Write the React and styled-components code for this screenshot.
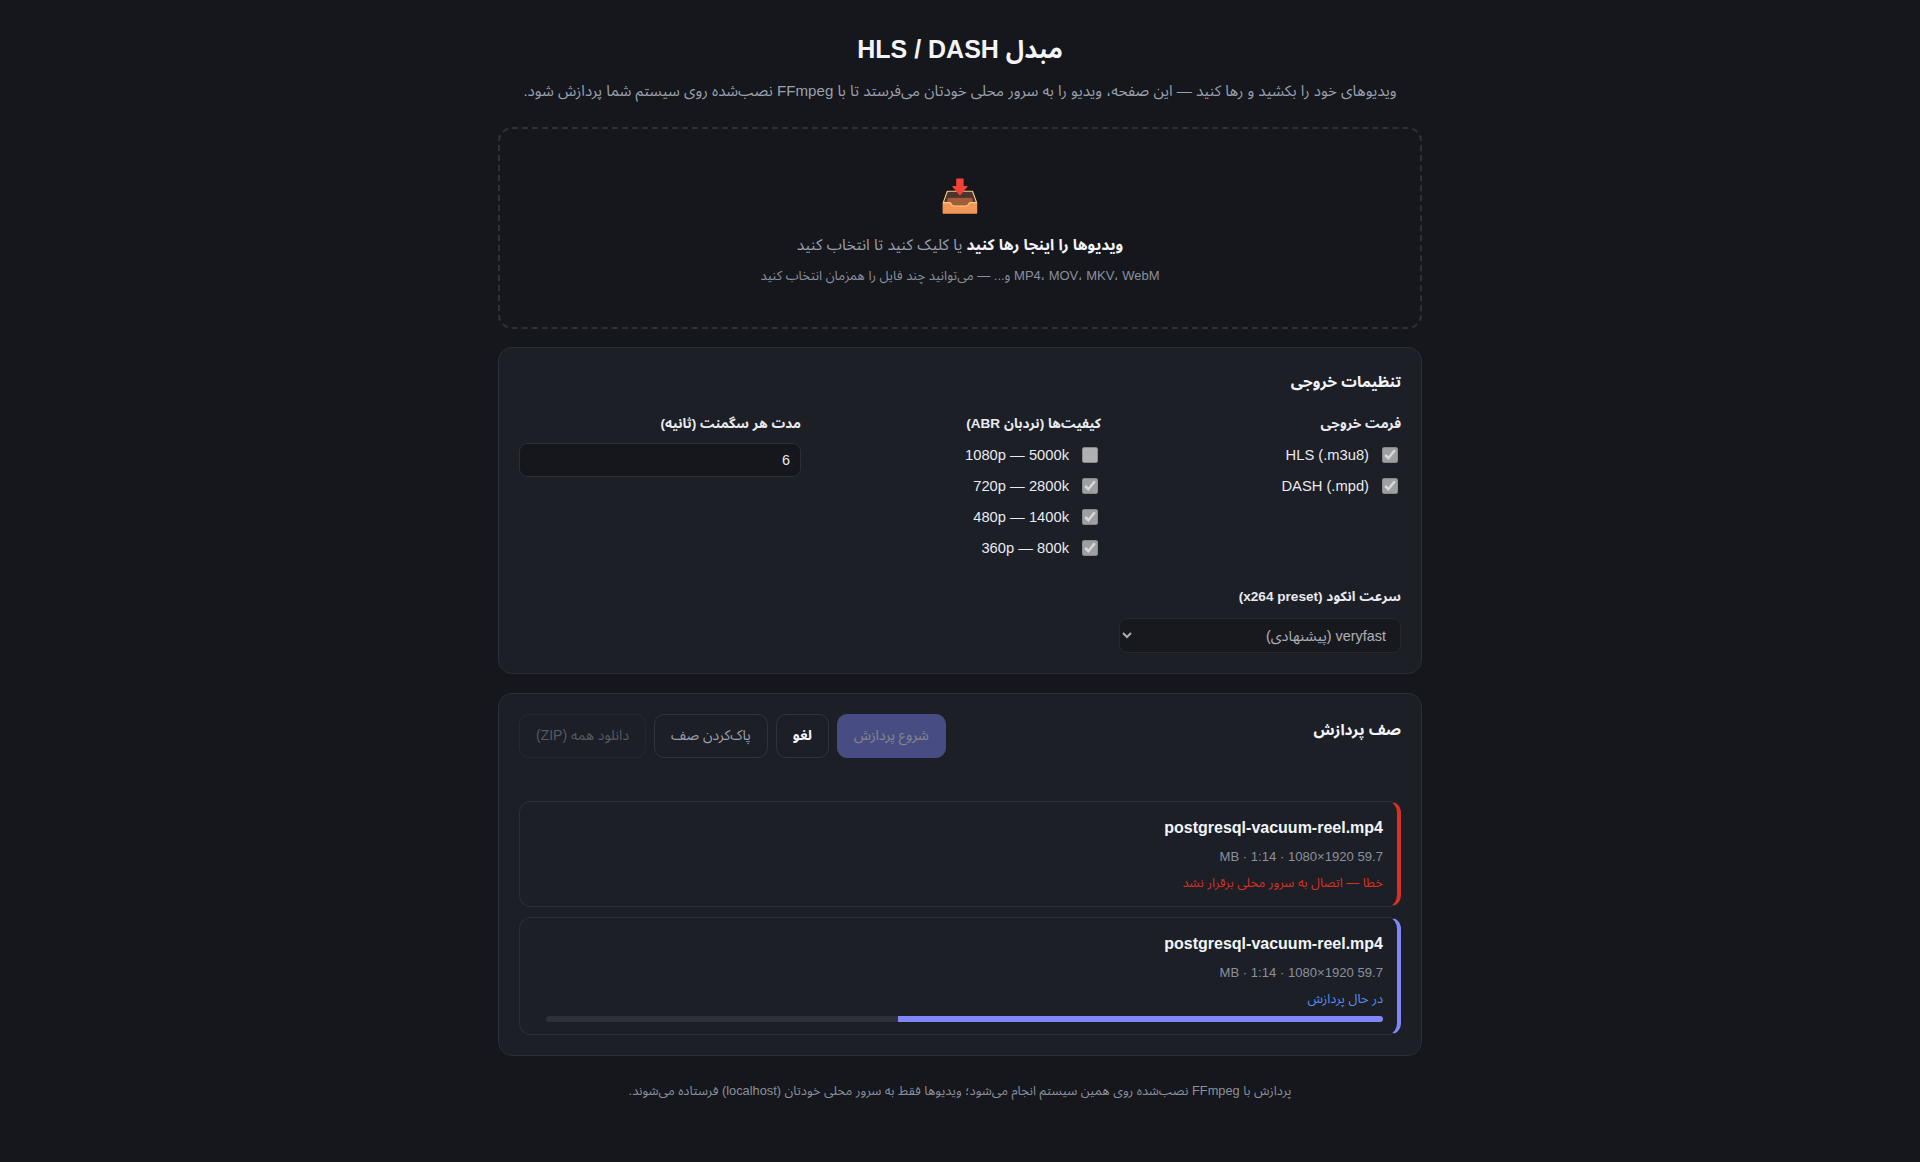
import React from "react";
import styled, { createGlobalStyle } from "styled-components";

const FONT = `"Liberation Sans", "Noto Sans Arabic", sans-serif`;

const GlobalStyle = createGlobalStyle`
  * { box-sizing: border-box; }
  html, body { margin: 0; padding: 0; }
  body {
    background: #15171c;
    color: #e8eaf0;
    font-family: ${FONT};
    direction: rtl;
  }
`;

const Page = styled.main`
  width: 924px;
  margin: 0 auto;
  padding: 32px 0 60px;
`;

const Title = styled.h1`
  margin: 0 0 16px;
  text-align: center;
  font-size: 25px;
  line-height: 34px;
  font-weight: 700;
  color: #f3f4f8;
`;

const Subtitle = styled.p`
  margin: 0 0 27px;
  text-align: center;
  font-size: 15.1px;
  line-height: 18px;
  color: #9aa0ae;
`;

const DropZone = styled.div`
  height: 202px;
  border: 2px dashed #2d313c;
  border-radius: 14px;
  margin-bottom: 18px;
  padding-top: 42px;
  text-align: center;
`;

const DropIcon = styled.div`
  font-size: 32px;
  line-height: 50px;
  margin-bottom: 13px;
`;

const DropText = styled.div`
  font-size: 15.4px;
  line-height: 22px;
  color: #9aa0ae;
  margin-bottom: 11px;
  b { color: #f3f4f8; font-weight: 700; }
`;

const DropHint = styled.div`
  font-size: 13px;
  line-height: 18px;
  color: #8b909e;
`;

const Panel = styled.section`
  background: #1c1f26;
  border: 1px solid #2a2e38;
  border-radius: 14px;
  padding: 20px;
  margin-bottom: 19px;
`;

const PanelTitle = styled.h2`
  margin: 0;
  font-size: 15.4px;
  line-height: 28px;
  font-weight: 700;
  color: #f3f4f8;
`;

const SettingsGrid = styled.div`
  display: grid;
  grid-template-columns: repeat(3, 1fr);
  gap: 26px 18px;
  margin-top: 17px;
`;

const Field = styled.div`
  min-width: 0;
`;

const FieldLabel = styled.div`
  padding-top: 1px;
  margin-bottom: 9px;
  font-size: 13.6px;
  line-height: 20px;
  font-weight: 700;
  color: #e8eaf0;
`;

const CheckRow = styled.label`
  display: flex;
  align-items: center;
  gap: 9px;
  height: 24px;
  margin-bottom: 7px;
  font-size: 14.72px;
  color: #e8eaf0;
  &:last-child { margin-bottom: 0; }
  input { width: 16px; height: 16px; }
`;

const NumberInput = styled.input`
  display: block;
  width: 100%;
  height: 34px;
  padding: 0 10px;
  background: #15171c;
  border: 1px solid #2a2e38;
  border-radius: 8px;
  color: #e8eaf0;
  font: 14.4px ${FONT};
`;

const Select = styled.select`
  display: block;
  width: 100%;
  height: 35px;
  margin-top: 11px;
  padding: 0 10px;
  background: #15171c;
  border: 1px solid #2a2e38;
  border-radius: 8px;
  color: #e8eaf0;
  font: 14.4px ${FONT};
`;

const QueueHead = styled.div`
  display: flex;
  justify-content: space-between;
  align-items: flex-start;
  padding-bottom: 43px;
  h2 { margin-top: 2px; }
`;

const Actions = styled.div`
  display: flex;
  gap: 8px;
`;

const Button = styled.button`
  height: 44px;
  padding: 0 16px 2px;
  border-radius: 10px;
  font: 14px ${FONT};
  background: ${(p) => (p.$primary ? "#7c85f5" : "transparent")};
  color: ${(p) => (p.$primary ? "#fff" : p.$bold ? "#f3f4f8" : "#9aa0ae")};
  border: 1px solid ${(p) => (p.$primary ? "#7c85f5" : "#2f333e")};
  font-weight: ${(p) => (p.$bold ? 700 : 400)};
  &:disabled { opacity: 0.45; }
`;

const JobList = styled.div`
  display: flex;
  flex-direction: column;
  gap: 10px;
`;

const Job = styled.article`
  border: 1px solid #2a2e38;
  border-right: 4px solid ${(p) => p.$accent};
  border-radius: 12px;
  padding: 14px 14px 11px 26px;
`;

const JobName = styled.div`
  font-size: 16px;
  line-height: 24px;
  font-weight: 700;
  color: #f3f4f8;
  margin-bottom: 8px;
`;

const JobMeta = styled.div`
  font-size: 13.1px;
  line-height: 18px;
  color: #8b909e;
  margin-bottom: 8px;
`;

const JobStatus = styled.div`
  font-size: 12.8px;
  line-height: 18px;
  margin-bottom: 3px;
  color: ${(p) => p.$color};
`;

const Track = styled.div`
  height: 6px;
  margin: 8px 0 1px;
  border-radius: 3px;
  background: #2d313c;
  overflow: hidden;
`;

const Fill = styled.div`
  height: 100%;
  background: #8087f8;
`;

const Footer = styled.footer`
  margin-top: 26px;
  text-align: center;
  font-size: 12.8px;
  line-height: 18px;
  color: #8b909e;
`;

const qualities = [
  { label: "1080p — 5000k", checked: false },
  { label: "720p — 2800k", checked: true },
  { label: "480p — 1400k", checked: true },
  { label: "360p — 800k", checked: true },
];

const JOB_NAME = "postgresql-vacuum-reel.mp4";
const JOB_META = "59.7 MB · 1:14 · 1080×1920";

const App = () => {
  return (
    <Page>
      <GlobalStyle />
      <Title>مبدل HLS / DASH</Title>
      <Subtitle>
        ویدیوهای خود را بکشید و رها کنید — این صفحه، ویدیو را به سرور محلی خودتان می‌فرستد تا با FFmpeg نصب‌شده روی سیستم شما پردازش شود.
      </Subtitle>

      <DropZone>
        <DropIcon>📥</DropIcon>
        <DropText>
          <b>ویدیوها را اینجا رها کنید</b> یا کلیک کنید تا انتخاب کنید
        </DropText>
        <DropHint>MP4، MOV، MKV، WebM و... — می‌توانید چند فایل را همزمان انتخاب کنید</DropHint>
      </DropZone>

      <Panel>
        <PanelTitle>تنظیمات خروجی</PanelTitle>
        <SettingsGrid>
          <Field>
            <FieldLabel>فرمت خروجی</FieldLabel>
            <CheckRow><input type="checkbox" defaultChecked disabled />HLS (.m3u8)</CheckRow>
            <CheckRow><input type="checkbox" defaultChecked disabled />DASH (.mpd)</CheckRow>
          </Field>
          <Field>
            <FieldLabel>کیفیت‌ها (نردبان ABR)</FieldLabel>
            {qualities.map((q) => (
              <CheckRow key={q.label}>
                <input type="checkbox" defaultChecked={q.checked} disabled />
                {q.label}
              </CheckRow>
            ))}
          </Field>
          <Field>
            <FieldLabel>مدت هر سگمنت (ثانیه)</FieldLabel>
            <NumberInput type="number" defaultValue={6} />
          </Field>
          <Field>
            <FieldLabel>سرعت انکود (x264 preset)</FieldLabel>
            <Select disabled defaultValue="veryfast">
              <option value="veryfast">veryfast (پیشنهادی)</option>
            </Select>
          </Field>
        </SettingsGrid>
      </Panel>

      <Panel>
        <QueueHead>
          <PanelTitle>صف پردازش</PanelTitle>
          <Actions>
            <Button $primary disabled>شروع پردازش</Button>
            <Button $bold>لغو</Button>
            <Button>پاک‌کردن صف</Button>
            <Button disabled>دانلود همه (ZIP)</Button>
          </Actions>
        </QueueHead>
        <JobList>
          <Job $accent="#d93025">
            <JobName>{JOB_NAME}</JobName>
            <JobMeta>{JOB_META}</JobMeta>
            <JobStatus $color="#d93025">خطا — اتصال به سرور محلی برقرار نشد</JobStatus>
          </Job>
          <Job $accent="#8087f8">
            <JobName>{JOB_NAME}</JobName>
            <JobMeta>{JOB_META}</JobMeta>
            <JobStatus $color="#5b8def">در حال پردازش</JobStatus>
            <Track>
              <Fill style={{ width: "58%" }} />
            </Track>
          </Job>
        </JobList>
      </Panel>

      <Footer>
        پردازش با FFmpeg نصب‌شده روی همین سیستم انجام می‌شود؛ ویدیوها فقط به سرور محلی خودتان (localhost) فرستاده می‌شوند.
      </Footer>
    </Page>
  );
};

export default App;
